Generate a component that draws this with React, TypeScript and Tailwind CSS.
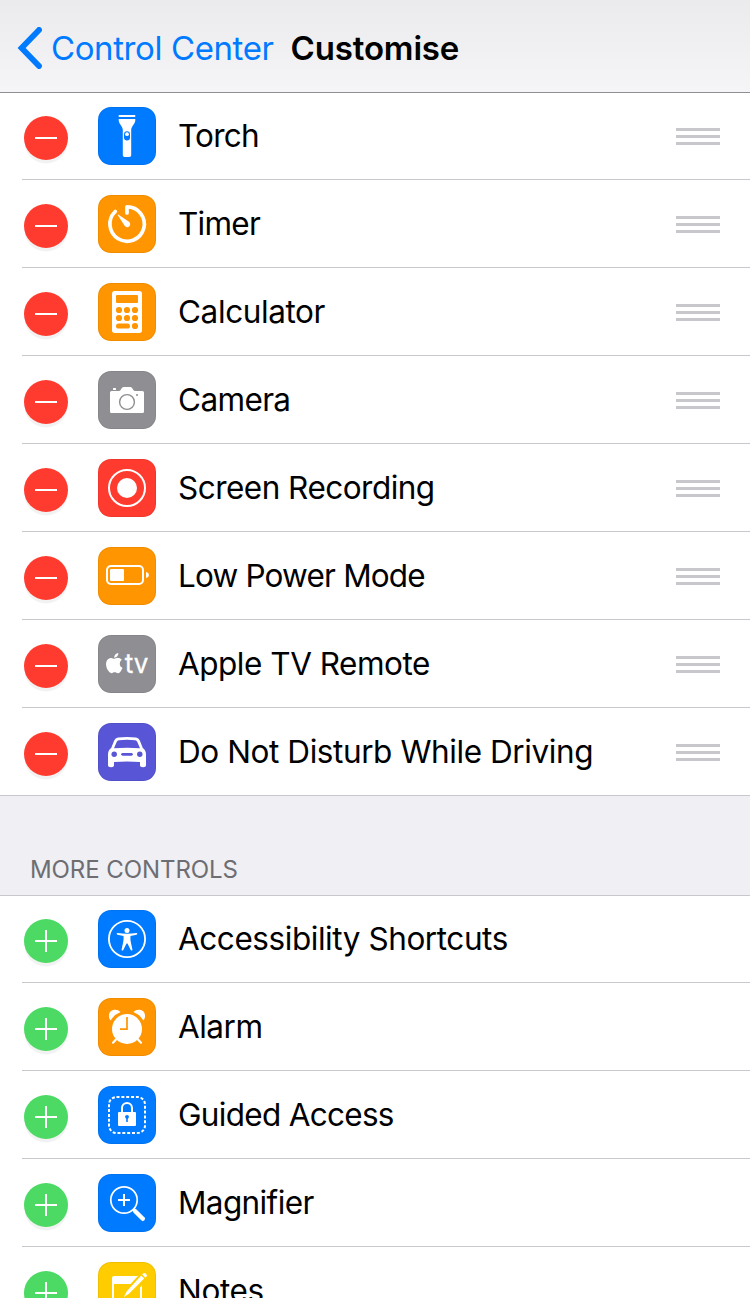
import type { ReactNode } from "react";

type Item = { label: string; tile: string; tracking: string; icon: ReactNode };

const active: Item[] = [
  {
    label: "Torch",
    tile: "bg-[#007aff]",
    tracking: "tracking-[-0.75px]",
    icon: (
      <>
        <rect x="20.7" y="8" width="16.6" height="2" rx="0.6" />
        <path d="M20.7 12h16.6v1.2c0 3.6-4.1 6-4.1 9.8V48.2q0 1.8-1.8 1.8h-4.8q-1.8 0-1.8-1.8V23c0-3.8-4.1-6.2-4.1-9.8z" />
        <rect x="26" y="24.2" width="6" height="9.2" rx="3" fill="#007aff" />
        <circle cx="29" cy="27.2" r="1.9" />
      </>
    ),
  },
  {
    label: "Timer",
    tile: "bg-[#ff9500]",
    tracking: "tracking-[-0.75px]",
    icon: (
      <>
        <path d="M29 18v-6.2A17.2 17.2 0 1 1 17.3 16.5" fill="none" stroke="#fff" strokeWidth="3.7" strokeLinecap="round" strokeLinejoin="round" />
        <path d="M19.7 19.9q.3-.6.9-.2L31 26.800A3 3 0 1 1 26.800 31z" />
      </>
    ),
  },
  {
    label: "Calculator",
    tile: "bg-[#ff9500]",
    tracking: "tracking-[-0.4px]",
    icon: (
      <>
        <rect x="14" y="8" width="30" height="42" rx="2.7" />
        <g fill="#ff9500">
          <rect x="18" y="12" width="22" height="8" rx="1" />
          {[27, 35].map((y) => [21, 29, 37].map((x) => <circle key={`${x}-${y}`} cx={x} cy={y} r="3.1" />))}
          <rect x="18" y="40.4" width="14" height="5.2" rx="2.6" />
          <circle cx="37" cy="43" r="3.1" />
        </g>
      </>
    ),
  },
  {
    label: "Camera",
    tile: "bg-[#8e8e93]",
    tracking: "tracking-[-0.63px]",
    icon: (
      <>
        <path d="M13.5 20H21c2 0 2.500-4 4.500-4h7c2 0 2.500 4 4.500 4h7.500q1.500 0 1.500 1.500v19q0 1.500-1.500 1.500h-31q-1.500 0-1.500-1.500v-19q0-1.500 1.500-1.500z" />
        <rect x="15" y="17" width="3" height="2" rx="0.5" />
        <circle cx="29" cy="31" r="7.4" fill="none" stroke="#8e8e93" strokeWidth="1.4" />
        <circle cx="39" cy="24" r="1" fill="#8e8e93" />
      </>
    ),
  },
  {
    label: "Screen Recording",
    tile: "bg-[#ff3b30]",
    tracking: "tracking-[-0.52px]",
    icon: (
      <>
        <circle cx="29" cy="29" r="18" fill="none" stroke="#fff" strokeWidth="2" />
        <circle cx="29" cy="29" r="10" />
      </>
    ),
  },
  {
    label: "Low Power Mode",
    tile: "bg-[#ff9500]",
    tracking: "tracking-[-0.82px]",
    icon: (
      <>
        <rect x="9" y="19" width="36" height="18" rx="4" fill="none" stroke="#fff" strokeWidth="2" />
        <rect x="12" y="22" width="14" height="12" rx="1" />
        <path d="M48 25c3.800.6 3.800 5.400 0 6z" />
      </>
    ),
  },
  {
    label: "Apple TV Remote",
    tile: "bg-[#8e8e93]",
    tracking: "tracking-[-0.48px]",
    icon: (
      <>
        <path
          transform="translate(6.2 18) scale(.84)"
          d="M12.152 6.896c-.948 0-2.415-1.078-3.960-1.040-2.040.027-3.910 1.183-4.961 3.014-2.117 3.675-.546 9.103 1.519 12.090 1.013 1.454 2.208 3.090 3.792 3.039 1.520-.065 2.090-.987 3.935-.987 1.831 0 2.350.987 3.960.948 1.637-.026 2.676-1.480 3.676-2.948 1.156-1.688 1.636-3.325 1.662-3.415-.039-.013-3.182-1.221-3.220-4.857-.026-3.040 2.480-4.494 2.597-4.559-1.429-2.090-3.623-2.324-4.390-2.376-2-.156-3.675 1.090-4.610 1.090zM15.530 3.830c.843-1.012 1.400-2.427 1.245-3.830-1.207.052-2.662.805-3.532 1.818-.780.896-1.454 2.338-1.273 3.714 1.338.104 2.715-.688 3.559-1.701"
        />
        <text x="26.8" y="37.8" className="font-['Inter',sans-serif] text-[27px]" stroke="#fff" strokeWidth="0.3" textLength="23.6" lengthAdjust="spacingAndGlyphs">
          tv
        </text>
      </>
    ),
  },
  {
    label: "Do Not Disturb While Driving",
    tile: "bg-[#5856d6]",
    tracking: "tracking-[-0.42px]",
    icon: (
      <>
        <path
          fillRule="evenodd"
          d="M20 14.500q9-1 18 0 2.800.3 3.800 3l3 7.500q3.200 2.300 3.200 6.500V42q0 2.200-3 2.200T42 42v-3q-13-1-26 0v3q0 2.200-3 2.200T10 42V31.500q0-4.200 3.200-6.500l3-7.500q1-2.700 3.800-3zM16 25.300q13-1.300 26 0l-2.800-6.600q-.5-1.300-2-1.500-8.200-.9-16.400 0-1.500.2-2 1.500z"
        />
        <g fill="#5856d6">
          <circle cx="16.2" cy="31.3" r="2.7" />
          <circle cx="41.8" cy="31.3" r="2.7" />
          <rect x="23.2" y="30" width="11.6" height="2.7" rx="1.35" />
        </g>
      </>
    ),
  },
];

const more: Item[] = [
  {
    label: "Accessibility Shortcuts",
    tile: "bg-[#007aff]",
    tracking: "tracking-[-0.44px]",
    icon: (
      <>
        <circle cx="29" cy="29" r="18.1" fill="none" stroke="#fff" strokeWidth="1.8" />
        <circle cx="29" cy="20.4" r="2.5" />
        <path d="M19.500 23.100q9.500 1.400 19 0 .8 0 .8.700t-.8.900l-6 1.200q-.4 3.500.3 6.200l1.600 7.300q.1.900-.6 1.100t-1.100-.6L29.500 33.500h-1l-3.200 6.400q-.4.800-1.100.6t-.6-1.100l1.600-7.300q.7-2.700.3-6.200l-6-1.200q-.8-.2-.8-.9t.8-.7z" />
      </>
    ),
  },
  {
    label: "Alarm",
    tile: "bg-[#ff9500]",
    tracking: "tracking-[-0.5px]",
    icon: (
      <>
        <path d="M18 41.500l-3 3.200M40 41.500l3 3.200" stroke="#fff" strokeWidth="2.2" strokeLinecap="round" />
        <circle cx="29" cy="31" r="15" />
        <path d="M12.600 22.600C9.300 18.500 11 12.300 16.300 11.800Q19.900 11.300 22.600 14.100Q16 16.800 12.600 22.600zM45.400 22.600C48.700 18.500 47 12.300 41.700 11.800Q38.100 11.300 35.400 14.100Q42 16.800 45.400 22.600z" />
        <path d="M29 19v12.200h-7" fill="none" stroke="#ff9500" strokeWidth="1.7" />
      </>
    ),
  },
  {
    label: "Guided Access",
    tile: "bg-[#007aff]",
    tracking: "tracking-[-0.7px]",
    icon: (
      <>
        <rect x="11" y="11" width="36" height="36" rx="7.5" fill="none" stroke="#fff" strokeWidth="2" strokeDasharray="3 1.85" />
        <path d="M24 27v-5a5 5 0 0 1 10 0v5" fill="none" stroke="#fff" strokeWidth="2" />
        <rect x="20" y="26" width="18" height="14" rx="1" />
        <circle cx="29" cy="30.8" r="1.9" fill="#007aff" />
        <rect x="28.2" y="31" width="1.6" height="5" rx=".6" fill="#007aff" />
      </>
    ),
  },
  {
    label: "Magnifier",
    tile: "bg-[#007aff]",
    tracking: "tracking-[-0.62px]",
    icon: (
      <g fill="none" stroke="#fff">
        <circle cx="26" cy="26" r="13.2" strokeWidth="1.7" />
        <path d="M20 26h12M26 20v12" strokeWidth="2" />
        <path d="M35 35l1.500 1.500" strokeWidth="2.5" />
        <path d="M37.200 37.200l7.600 7.600" strokeWidth="4.4" strokeLinecap="round" />
      </g>
    ),
  },
  {
    label: "Notes",
    tile: "bg-[#ffcc00]",
    tracking: "tracking-[-0.35px]",
    icon: (
      <>
        <path d="M16 14h24l-7.500 8H16v24h26V25.500l2-2V48H14V16q0-2 2-2z" />
        <path d="M43.200 13.500l3 3L31 31.700l-5.200 3.300 3-5.800zM44.200 12.500l1-1q1.200-1.200 2.400 0l.8.800q1.200 1.200 0 2.400l-1 1z" />
      </>
    ),
  },
];

function Row({ item, removable, last }: { item: Item; removable: boolean; last: boolean }) {
  return (
    <li className="flex h-[88px] shrink-0 items-end first:h-[87px]">
      <div
        className={
          last
            ? "flex h-full w-full items-end border-b border-[#c8c7cc] pl-6"
            : "ml-[22px] flex h-full w-full items-end border-b border-[#c8c7cc] pl-0.5"
        }
      >
        <button
          aria-label={removable ? "Remove" : "Add"}
          className={
            removable
              ? "mb-[19px] size-11 shrink-0 rounded-full bg-[#ff3b30] shadow-[0_4px_0_-0.5px_#f2f2f2]"
              : "mb-[19px] size-11 shrink-0 rounded-full bg-[#4cd964] shadow-[0_4px_0_-0.5px_#f2f2f2]"
          }
        >
          <svg viewBox="0 0 44 44" className="size-11" stroke="#fff" strokeWidth="2">
            <path d={removable ? "M11 22h22" : "M11 22h22M22 11v22"} />
          </svg>
        </button>
        <div className={`mb-3.5 ml-[30px] size-[58px] shrink-0 rounded-[13px] shadow-[inset_0_0_0_1px_rgba(0,0,0,0.06)] ${item.tile}`}>
          <svg viewBox="0 0 58 58" className="size-[58px]" fill="#fff">
            {item.icon}
          </svg>
        </div>
        <span className={`mb-[21px] ml-[22px] text-[31.5px] leading-[44px] whitespace-nowrap ${item.tracking}`}>{item.label}</span>
        {removable && (
          <div className="mr-[30px] mb-[34px] ml-auto flex w-11 shrink-0 flex-col gap-1">
            <div className="h-[3px] bg-[#c7c7cc]" />
            <div className="h-[3px] bg-[#c7c7cc]" />
            <div className="h-[3px] bg-[#c7c7cc]" />
          </div>
        )}
      </div>
    </li>
  );
}

export default function App() {
  return (
    <div className="flex h-[1298px] w-[750px] flex-col overflow-hidden bg-white font-['Inter',sans-serif] text-black">
      <header className="flex h-[93px] shrink-0 items-center border-b border-[#8e8e93] bg-gradient-to-b from-[#ebebed] to-[#f5f5f7] pt-1 pl-[17px]">
        <svg viewBox="0 0 26 42" className="h-[42px] w-[26px] shrink-0" fill="none" stroke="#007aff" strokeWidth="5.8" strokeLinecap="round">
          <path d="M22 2.900L4.600 21L22 39.100" />
        </svg>
        <span className="ml-2 text-[33px] leading-10 tracking-[-0.4px] whitespace-nowrap text-[#007aff]">Control Center</span>
        <h1 className="ml-[17px] text-[33px] leading-10 font-semibold tracking-[-0.15px] whitespace-nowrap">Customise</h1>
      </header>
      <ul className="flex shrink-0 flex-col">
        {active.map((item, i) => (
          <Row key={item.label} item={item} removable last={i === active.length - 1} />
        ))}
      </ul>
      <h2 className="flex h-[100px] shrink-0 items-end border-b border-[#c8c7cc] bg-[#efeff4] pb-[9px] pl-[30px] text-2xl tracking-[-0.08px] text-[#6d6d72]">
        MORE CONTROLS
      </h2>
      <ul className="flex shrink-0 flex-col">
        {more.map((item) => (
          <Row key={item.label} item={item} removable={false} last={false} />
        ))}
      </ul>
    </div>
  );
}
